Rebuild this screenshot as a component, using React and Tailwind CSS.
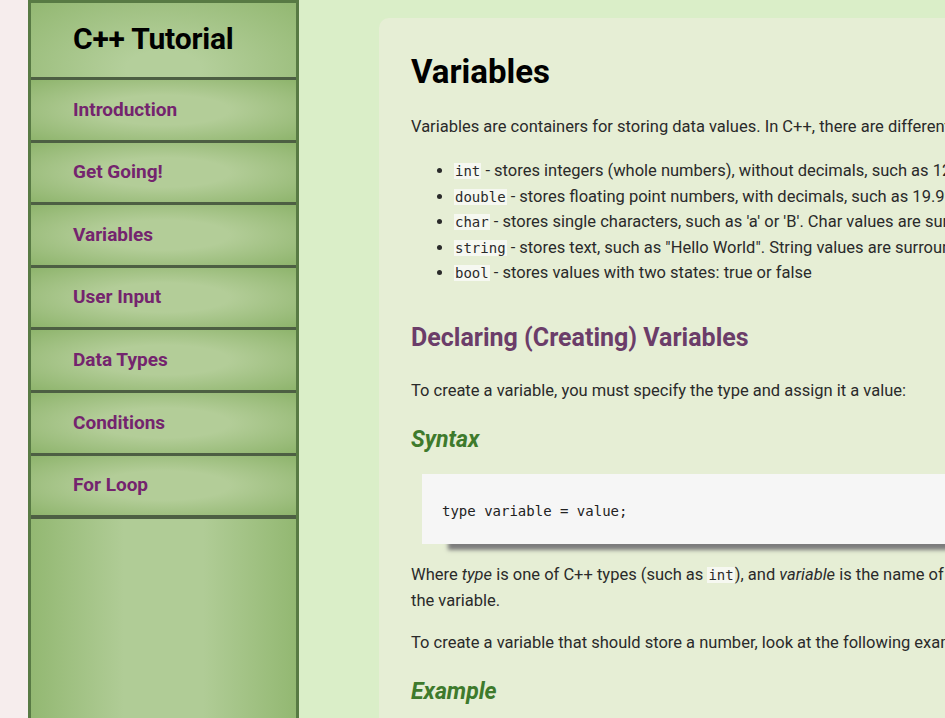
import React from "react";

const navItems = [
  "Introduction",
  "Get Going!",
  "Variables",
  "User Input",
  "Data Types",
  "Conditions",
  "For Loop",
];

const types = [
  ["int", "stores integers (whole numbers), without decimals, such as 123 or -123"],
  ["double", "stores floating point numbers, with decimals, such as 19.99 or -19.99"],
  ["char", "stores single characters, such as 'a' or 'B'. Char values are surrounded by single quotes"],
  ["string", "stores text, such as \"Hello World\". String values are surrounded by double quotes"],
  ["bool", "stores values with two states: true or false"],
];

function Code({ children }) {
  return (
    <code className="font-['DejaVu_Sans_Mono',monospace] text-[14px] leading-none bg-[#f6f8f1] px-px">
      {children}
    </code>
  );
}

export default function App() {
  return (
    <div className="flex h-[718px] w-[945px] overflow-hidden bg-[#daeec8] font-['Roboto',sans-serif]">
      <div className="w-[28px] shrink-0 bg-[#f6eded]" />

      {/* sidebar */}
      <div className="flex w-[271px] shrink-0 flex-col border-x-[3px] border-t-[3px] border-[#587a44]">
        <div className="flex h-[74px] items-center bg-[radial-gradient(ellipse_at_50%_90%,#b4cf9b_20%,#93b872_100%)] pb-[4px] pl-[42px]">
          <h2 className="text-[30px] font-bold tracking-[-0.2px] text-black">C++ Tutorial</h2>
        </div>
        {navItems.map((item) => (
          <div
            key={item}
            className="flex h-[62.6px] items-center border-t-[3px] border-[#4d5f43] bg-[radial-gradient(ellipse_at_center,#b3cd98_35%,#8eb46c_100%)] pl-[42px]"
          >
            <a className="text-[19px] font-bold text-[#74246e]">{item}</a>
          </div>
        ))}
        <div className="flex-1 border-t-[4px] border-[#4d5f43] bg-[linear-gradient(to_right,#93b872,#b0cc96_35%,#b0cc96_65%,#93b872)]" />
      </div>

      {/* main */}
      <div className="min-w-0 flex-1 pl-[80px] pt-[18px]">
        <div className="h-full overflow-hidden rounded-tl-[10px] bg-[#e6eed5] pl-[32px] pt-[34px] text-[16.5px] text-[#2a2a2a]">
          <h1 className="text-[33px] font-bold leading-[40px] text-black">Variables</h1>
          <p className="mt-[22px] whitespace-nowrap leading-[26px]">
            Variables are containers for storing data values. In C++, there are different types of variables
          </p>
          <ul className="mt-[18px] list-disc pl-[43px]">
            {types.map(([t, d]) => (
              <li key={t} className="whitespace-nowrap leading-[25.6px]">
                <Code>{t}</Code> - {d}
              </li>
            ))}
          </ul>
          <h2 className="mt-[32px] text-[25px] font-bold leading-[40px] text-[#6b3d69]">
            Declaring (Creating) Variables
          </h2>
          <p className="mt-[20px] whitespace-nowrap leading-[26px]">
            To create a variable, you must specify the type and assign it a value:
          </p>
          <h3 className="mt-[21px] text-[23px] font-bold italic leading-[30px] text-[#3e7a2c]">Syntax</h3>
          <div className="ml-[11px] mt-[19px] flex h-[70px] items-center bg-[#f6f6f6] pl-[20px] pt-[5px] shadow-[26px_6px_4px_#7c7c7c]">
            <pre className="font-['DejaVu_Sans_Mono',monospace] text-[14px] text-[#222]">type variable = value;</pre>
          </div>
          <p className="mt-[18px] leading-[26px]">
            <span className="whitespace-nowrap">
              Where <em>type</em> is one of C++ types (such as <Code>int</Code>), and <em>variable</em> is the name of the
            </span>
            <br />
            the variable.
          </p>
          <p className="mt-[16px] whitespace-nowrap leading-[26px]">
            To create a variable that should store a number, look at the following example:
          </p>
          <h3 className="mt-[21px] text-[23px] font-bold italic leading-[30px] text-[#3e7a2c]">Example</h3>
        </div>
      </div>
    </div>
  );
}
